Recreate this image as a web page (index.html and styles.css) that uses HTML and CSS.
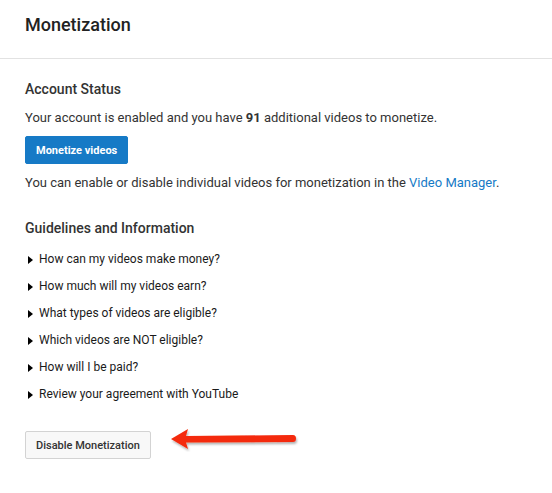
FILE: index.html
```html
<!DOCTYPE html>
<html lang="en">

<head>
    <meta charset="UTF-8">
    <meta name="viewport" content="width=device-width, initial-scale=1.0">
    <title>Monetization</title>
    <link rel="stylesheet" href="styles.css">
</head>

<body class="main">
    <div class="page-header">
        <h1>Monetization</h1>
    </div>

    <div class="content">
        <h2>Account Status</h2>
        <p>Your account is enabled and you have <b>91</b> additional videos to monetize.</p>
        <button class="btn-primary">Monetize videos</button>
        <p class="note">You can enable or disable individual videos for monetization in the <a href="#">Video Manager</a>.</p>

        <h2 class="guidelines">Guidelines and Information</h2>
        <ul class="faq">
            <li>How can my videos make money?</li>
            <li>How much will my videos earn?</li>
            <li>What types of videos are eligible?</li>
            <li>Which videos are NOT eligible?</li>
            <li>How will I be paid?</li>
            <li>Review your agreement with YouTube</li>
        </ul>

        <div class="disable-row">
            <button class="btn-default">Disable Monetization</button>
            <!-- annotation arrow pointing at the button -->
            <svg class="arrow" width="130" height="26" viewBox="0 0 130 26">
                <defs>
                    <filter id="shadow" x="-10%" y="-40%" width="120%" height="200%">
                        <feDropShadow dx="1" dy="2" stdDeviation="1.2" flood-color="#000" flood-opacity="0.3" />
                    </filter>
                </defs>
                <g filter="url(#shadow)">
                    <path d="M2 13 L19 3 L17 10 L124 9 Q127 9 127 12.5 Q127 16 124 16 L17 16.5 L19 23 Z" fill="#f42a0c" />
                </g>
            </svg>
        </div>
    </div>
</body>

</html>
```

FILE: styles.css
```css
.main {
    margin: 0;
    background-color: #fff;
    font-family: Roboto, "Liberation Sans", Arial, sans-serif;
    font-size: 13px;
    color: #333;
}

.page-header {
    height: 58px;
    padding: 0 25px;
    border-bottom: 1px solid #e2e2e2;
}

.page-header h1 {
    margin: 0;
    padding-top: 14px;
    font-size: 18px;
    font-weight: 500;
    color: #222;
}

.content {
    padding: 22px 25px 0;
}

.content h2 {
    margin: 0;
    font-size: 14px;
    font-weight: 500;
    line-height: 16px;
    color: #333;
}

.content p {
    margin: 0;
    line-height: 18px;
}

.content h2 + p {
    margin-top: 12px;
}

.content a {
    color: #167ac6;
    text-decoration: none;
}

.btn-primary {
    display: block;
    margin-top: 9px;
    height: 28px;
    padding: 0 10px;
    background-color: #167ac6;
    border: 1px solid #167ac6;
    border-radius: 2px;
    color: #fff;
    font-family: inherit;
    font-size: 11px;
    font-weight: bold;
}

.note {
    margin-top: 10px !important;
}

.guidelines {
    margin-top: 28px !important;
}

.faq {
    list-style: none;
    margin: 10px 0 0;
    padding: 0;
}

.faq li {
    position: relative;
    line-height: 27px;
    padding-left: 14px;
    font-size: 12px;
    color: #1a1a1a;
}

/* small black disclosure triangle */
.faq li:before {
    content: "";
    position: absolute;
    left: 3px;
    top: 10px;
    border-left: 5px solid #000;
    border-top: 4px solid transparent;
    border-bottom: 4px solid transparent;
}

.disable-row {
    display: flex;
    align-items: center;
    margin-top: 23px;
}

.btn-default {
    height: 28px;
    padding: 0 10px;
    background-color: #f8f8f8;
    border: 1px solid #d3d3d3;
    border-radius: 2px;
    color: #333;
    font-family: inherit;
    font-size: 11px;
    font-weight: 500;
}

.arrow {
    margin-left: 18px;
    margin-top: -13px;
}
```
